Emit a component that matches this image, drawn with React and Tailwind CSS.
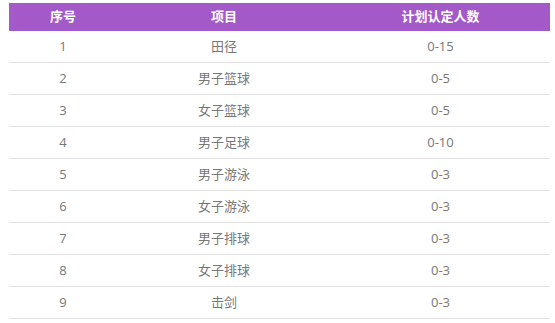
import React from 'react';

const rows = [
  ['1', '田径', '0-15'],
  ['2', '男子篮球', '0-5'],
  ['3', '女子篮球', '0-5'],
  ['4', '男子足球', '0-10'],
  ['5', '男子游泳', '0-3'],
  ['6', '女子游泳', '0-3'],
  ['7', '男子排球', '0-3'],
  ['8', '女子排球', '0-3'],
  ['9', '击剑', '0-3'],
];

export default function App() {
  return (
    <div
      className="w-[555px] h-[323px] bg-white pt-[3px] pl-[9px] overflow-hidden"
      style={{ fontFamily: '"Open Sans", "Noto Sans CJK SC", sans-serif' }}
    >
      <div className="w-[541px]">
        <div className="grid grid-cols-[108px_214px_219px] h-[28px] items-center bg-[#a459c8] text-white text-[13px] font-bold text-center">
          <div>序号</div>
          <div>项目</div>
          <div>计划认定人数</div>
        </div>
        {rows.map(r => (
          <div
            key={r[0]}
            className="grid grid-cols-[108px_214px_219px] h-[32px] items-center border-b border-[#e0e0e0] text-[13px] text-[#777] text-center"
          >
            <div>{r[0]}</div>
            <div>{r[1]}</div>
            <div>{r[2]}</div>
          </div>
        ))}
      </div>
    </div>
  );
}
